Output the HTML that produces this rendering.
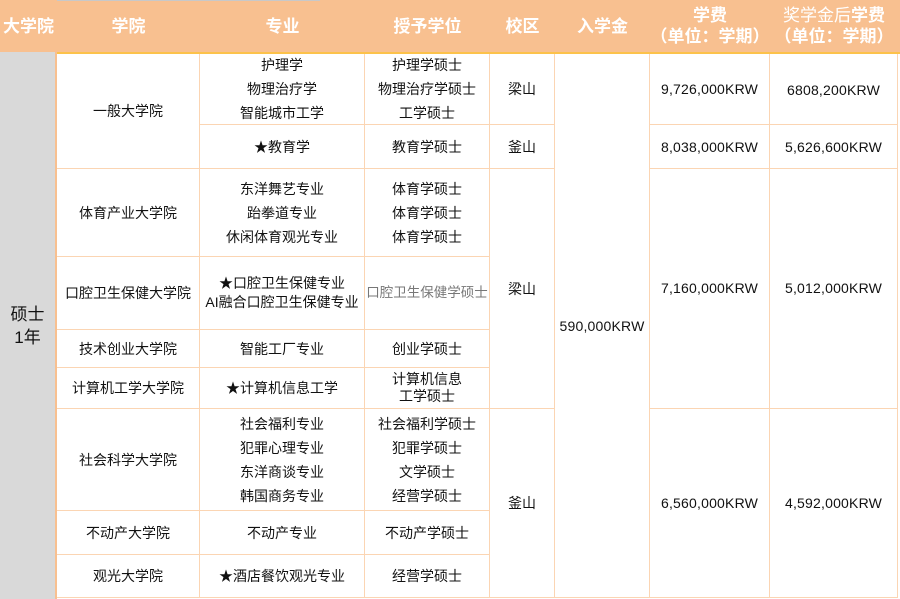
<!DOCTYPE html>
<html><head><meta charset="utf-8"><style>
body{margin:0;width:900px;height:599px;overflow:hidden;background:#fff;font-family:"Liberation Sans","Noto Sans CJK SC",sans-serif;}
.c{position:absolute;box-sizing:border-box;display:flex;align-items:center;justify-content:center;text-align:center;font-size:14px;color:#111;line-height:24px;border-right:1px solid #fbd5b3;border-bottom:1px solid #fbd5b3;}
.n{font-size:14px;letter-spacing:0.2px}
.h{position:absolute;top:0;height:52px;display:flex;align-items:center;justify-content:center;text-align:center;color:#fff;font-weight:bold;font-size:17px;line-height:21px;}
</style></head><body>
<div style="position:absolute;left:0;top:0;width:900px;height:52px;background:#f8c090"></div>
<div style="position:absolute;left:57px;top:0;width:263px;height:1px;background:#c8c8c8"></div>
<div class="h" style="left:0;width:57px">大学院</div>
<div class="h" style="left:57px;width:143px">学院</div>
<div class="h" style="left:200px;width:165px">专业</div>
<div class="h" style="left:365px;width:125px">授予学位</div>
<div class="h" style="left:490px;width:65px">校区</div>
<div class="h" style="left:555px;width:95px">入学金</div>
<div class="h" style="left:650px;width:120px;white-space:nowrap">学费<br>（单位：学期）</div>
<div class="h" style="left:770px;width:128px;white-space:nowrap"><span><span style="font-weight:normal">奖学金后</span>学费<br>（单位：学期）</span></div>
<div style="position:absolute;left:57px;top:52px;width:843px;height:2px;background:#fcc24a"></div>
<div style="position:absolute;left:0;top:52px;width:57px;height:547px;background:#d9d9d9;border-right:2px solid #f8c090;box-sizing:border-box;display:flex;align-items:center;justify-content:center;text-align:center;font-size:17px;line-height:23px;color:#111">硕士<br>1年</div>

<div class="c" style="left:57px;top:54px;width:143px;height:115px">一般大学院</div>
<div class="c" style="left:200px;top:54px;width:165px;height:71px">护理学<br>物理治疗学<br>智能城市工学</div>
<div class="c" style="left:365px;top:54px;width:125px;height:71px">护理学硕士<br>物理治疗学硕士<br>工学硕士</div>
<div class="c" style="left:200px;top:125px;width:165px;height:44px">★教育学</div>
<div class="c" style="left:365px;top:125px;width:125px;height:44px">教育学硕士</div>

<div class="c" style="left:57px;top:169px;width:143px;height:88px">体育产业大学院</div>
<div class="c" style="left:200px;top:169px;width:165px;height:88px">东洋舞艺专业<br>跆拳道专业<br>休闲体育观光专业</div>
<div class="c" style="left:365px;top:169px;width:125px;height:88px">体育学硕士<br>体育学硕士<br>体育学硕士</div>

<div class="c" style="left:57px;top:257px;width:143px;height:73px">口腔卫生保健大学院</div>
<div class="c" style="left:200px;top:257px;width:165px;height:73px;line-height:19px;white-space:nowrap">★口腔卫生保健专业<br>AI融合口腔卫生保健专业</div>
<div class="c" style="left:365px;top:257px;width:125px;height:73px;color:#777;font-size:13.5px;white-space:nowrap">口腔卫生保健学硕士</div>

<div class="c" style="left:57px;top:330px;width:143px;height:38px">技术创业大学院</div>
<div class="c" style="left:200px;top:330px;width:165px;height:38px">智能工厂专业</div>
<div class="c" style="left:365px;top:330px;width:125px;height:38px">创业学硕士</div>

<div class="c" style="left:57px;top:368px;width:143px;height:41px">计算机工学大学院</div>
<div class="c" style="left:200px;top:368px;width:165px;height:41px">★计算机信息工学</div>
<div class="c" style="left:365px;top:368px;width:125px;height:41px;line-height:17px">计算机信息<br>工学硕士</div>

<div class="c" style="left:57px;top:409px;width:143px;height:102px">社会科学大学院</div>
<div class="c" style="left:200px;top:409px;width:165px;height:102px">社会福利专业<br>犯罪心理专业<br>东洋商谈专业<br>韩国商务专业</div>
<div class="c" style="left:365px;top:409px;width:125px;height:102px">社会福利学硕士<br>犯罪学硕士<br>文学硕士<br>经营学硕士</div>

<div class="c" style="left:57px;top:511px;width:143px;height:44px">不动产大学院</div>
<div class="c" style="left:200px;top:511px;width:165px;height:44px">不动产专业</div>
<div class="c" style="left:365px;top:511px;width:125px;height:44px">不动产学硕士</div>

<div class="c" style="left:57px;top:555px;width:143px;height:43px">观光大学院</div>
<div class="c" style="left:200px;top:555px;width:165px;height:43px">★酒店餐饮观光专业</div>
<div class="c" style="left:365px;top:555px;width:125px;height:43px">经营学硕士</div>

<div class="c" style="left:490px;top:54px;width:65px;height:71px">梁山</div>
<div class="c" style="left:490px;top:125px;width:65px;height:44px">釜山</div>
<div class="c" style="left:490px;top:169px;width:65px;height:240px">梁山</div>
<div class="c" style="left:490px;top:409px;width:65px;height:189px">釜山</div>

<div class="c n" style="left:555px;top:54px;width:95px;height:544px">590,000KRW</div>

<div class="c n" style="left:650px;top:54px;width:120px;height:71px">9,726,000KRW</div>
<div class="c n" style="left:650px;top:125px;width:120px;height:44px">8,038,000KRW</div>
<div class="c n" style="left:650px;top:169px;width:120px;height:240px;align-items:flex-start;padding-top:107px">7,160,000KRW</div>
<div class="c n" style="left:650px;top:409px;width:120px;height:189px">6,560,000KRW</div>

<div class="c n" style="left:770px;top:54px;width:128px;height:71px;align-items:flex-start;padding-top:24px">6808,200KRW</div>
<div class="c n" style="left:770px;top:125px;width:128px;height:44px">5,626,600KRW</div>
<div class="c n" style="left:770px;top:169px;width:128px;height:240px;align-items:flex-start;padding-top:107px">5,012,000KRW</div>
<div class="c n" style="left:770px;top:409px;width:128px;height:189px">4,592,000KRW</div>
</body></html>
